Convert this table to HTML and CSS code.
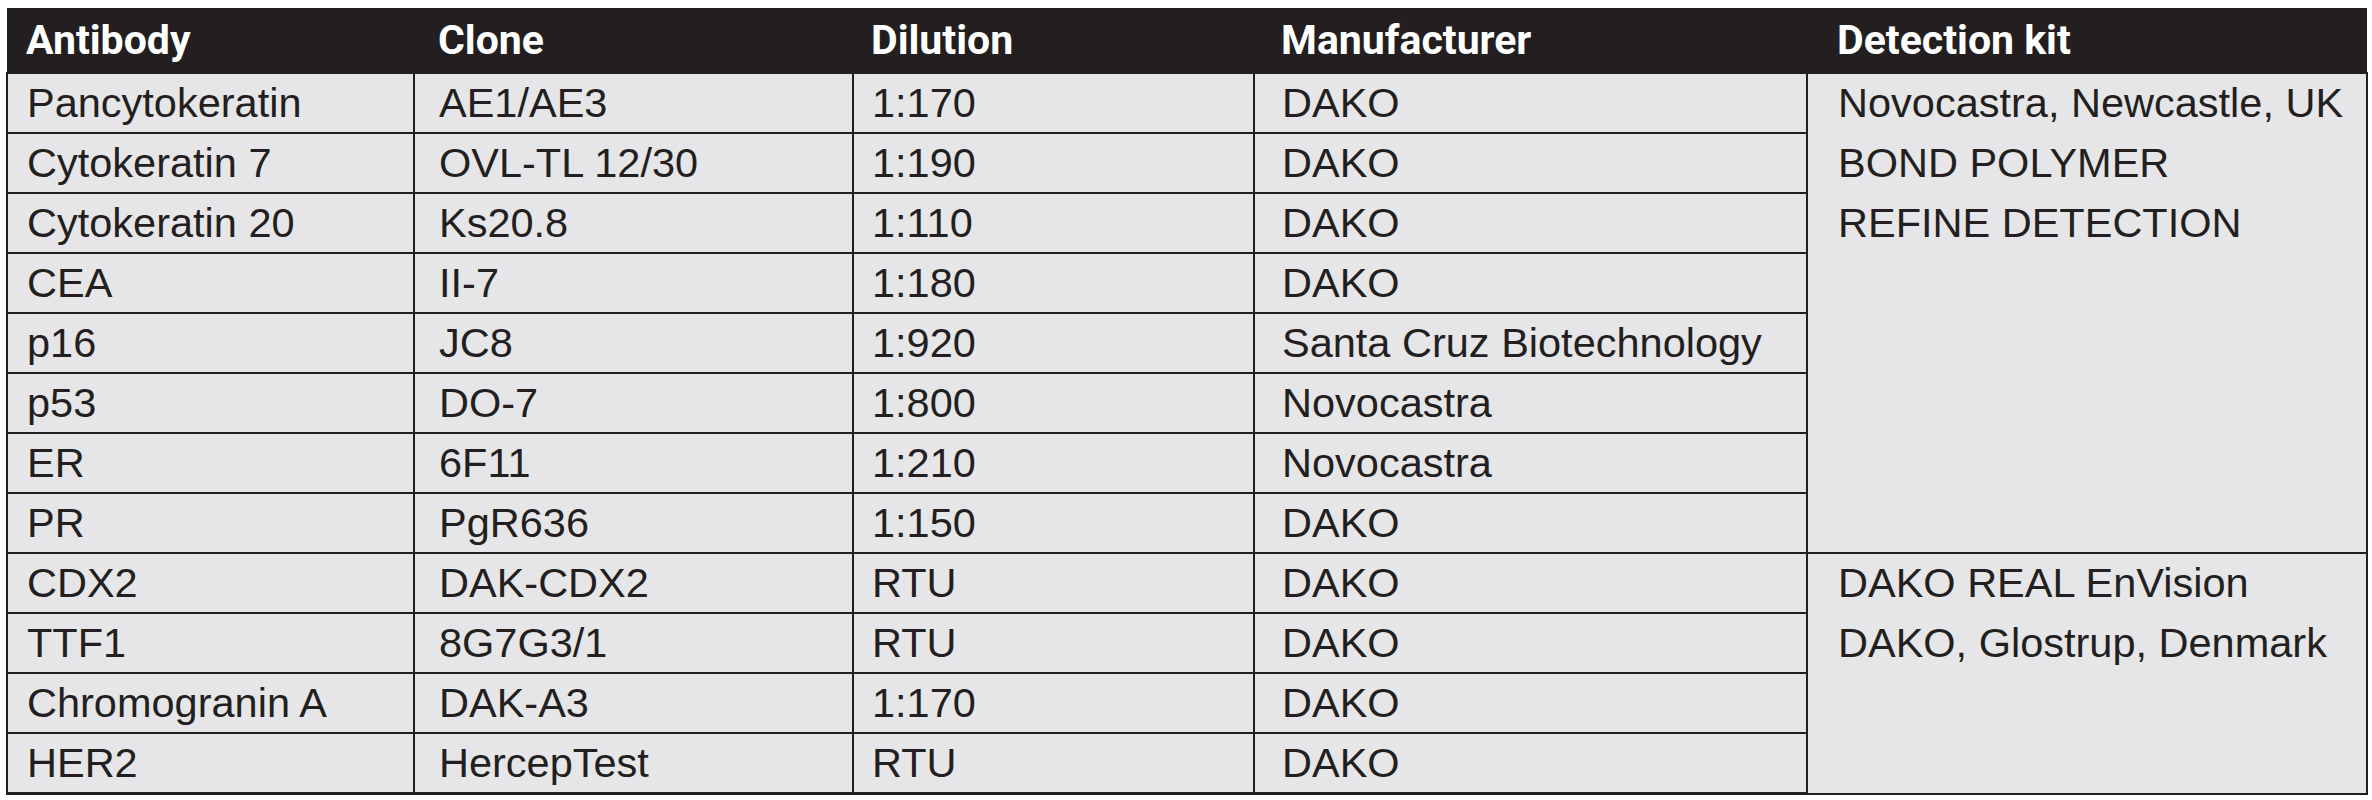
FILE: index.html
```html
<!DOCTYPE html>
<html>
<head>
<meta charset="utf-8">
<title>Antibodies</title>
<link rel="stylesheet" href="styles.css">
</head>
<body>
<table class="ab">
  <colgroup>
    <col class="c1"><col class="c2"><col class="c3"><col class="c4"><col class="c5">
  </colgroup>
  <thead>
    <tr><th>Antibody</th><th>Clone</th><th>Dilution</th><th>Manufacturer</th><th>Detection kit</th></tr>
  </thead>
  <tbody>
    <tr><td>Pancytokeratin</td><td>AE1/AE3</td><td>1:170</td><td>DAKO</td>
      <td rowspan="8" class="kit"><div class="ln">Novocastra, Newcastle, UK</div><div class="ln">BOND POLYMER</div><div class="ln">REFINE DETECTION</div></td></tr>
    <tr><td>Cytokeratin 7</td><td>OVL-TL 12/30</td><td>1:190</td><td>DAKO</td></tr>
    <tr><td>Cytokeratin 20</td><td>Ks20.8</td><td>1:110</td><td>DAKO</td></tr>
    <tr><td>CEA</td><td>II-7</td><td>1:180</td><td>DAKO</td></tr>
    <tr><td>p16</td><td>JC8</td><td>1:920</td><td>Santa Cruz Biotechnology</td></tr>
    <tr><td>p53</td><td>DO-7</td><td>1:800</td><td>Novocastra</td></tr>
    <tr><td>ER</td><td>6F11</td><td>1:210</td><td>Novocastra</td></tr>
    <tr><td>PR</td><td>PgR636</td><td>1:150</td><td>DAKO</td></tr>
    <tr><td>CDX2</td><td>DAK-CDX2</td><td>RTU</td><td>DAKO</td>
      <td rowspan="4" class="kit"><div class="ln">DAKO REAL EnVision</div><div class="ln">DAKO, Glostrup, Denmark</div></td></tr>
    <tr><td>TTF1</td><td>8G7G3/1</td><td>RTU</td><td>DAKO</td></tr>
    <tr><td>Chromogranin A</td><td>DAK-A3</td><td>1:170</td><td>DAKO</td></tr>
    <tr class="last"><td>HER2</td><td>HercepTest</td><td>RTU</td><td>DAKO</td></tr>
  </tbody>
</table>
</body>
</html>
```
FILE: styles.css
```css
html, body {
  margin: 0;
  background: #ffffff;
}
body {
  padding: 8px 6px 0 6px;
}
.ab {
  border-collapse: collapse;
  table-layout: fixed;
  width: 2360px;
  color: #231f20;
}
.c1 { width: 407px; }
.c2 { width: 439px; }
.c3 { width: 401px; }
.c4 { width: 553px; }
.c5 { width: 560px; }

.ab th {
  background: #231f20;
  color: #ffffff;
  font-family: Roboto, "Liberation Sans", sans-serif;
  font-weight: 700;
  font-size: 41px;
  height: 64px;
  line-height: 64px;
  padding: 0;
  text-align: left;
  vertical-align: top;
  border: 0;
  white-space: nowrap;
}
.ab td {
  background: #e6e6e8;
  font-family: "Liberation Sans", Arial, sans-serif;
  font-size: 41.5px;
  height: 58px;
  line-height: 58px;
  padding: 0;
  border: 2px solid #231f20;
  vertical-align: top;
  white-space: nowrap;
}
.ab tr.last td { border-bottom-width: 3px; }

.ab th:nth-child(1), .ab td:nth-child(1) { padding-left: 19px; }
.ab th:nth-child(2), .ab td:nth-child(2) { padding-left: 24px; }
.ab th:nth-child(3), .ab td:nth-child(3) { padding-left: 18px; }
.ab th:nth-child(4), .ab td:nth-child(4) { padding-left: 27px; }
.ab th:nth-child(5) { padding-left: 30px; }
.ab td.kit { padding-left: 30px; }

.kit .ln {
  height: 60px;
  line-height: 58px;
}
```
